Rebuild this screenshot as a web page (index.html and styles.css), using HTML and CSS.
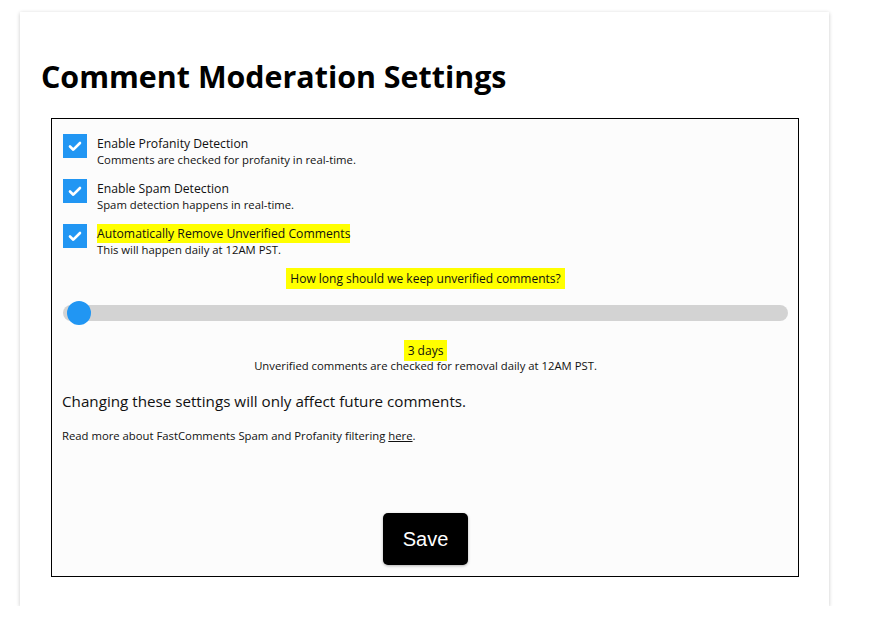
FILE: index.html
```html
<!DOCTYPE html>
<html>
<head>
<meta charset="utf-8">
<link rel="stylesheet" href="styles.css">
</head>
<body>
<div class="card">
  <h1 class="title">Comment Moderation Settings</h1>
  <div class="panel">
    <div class="option">
      <span class="check"><svg viewBox="0 0 24 24" width="24" height="24"><path d="M7 12.5l3.3 3.2L17 9" fill="none" stroke="#fff" stroke-width="2.6" stroke-linecap="round" stroke-linejoin="round"/></svg></span>
      <div class="option-text">
        <div class="option-label">Enable Profanity Detection</div>
        <div class="option-desc">Comments are checked for profanity in real-time.</div>
      </div>
    </div>
    <div class="option">
      <span class="check"><svg viewBox="0 0 24 24" width="24" height="24"><path d="M7 12.5l3.3 3.2L17 9" fill="none" stroke="#fff" stroke-width="2.6" stroke-linecap="round" stroke-linejoin="round"/></svg></span>
      <div class="option-text">
        <div class="option-label">Enable Spam Detection</div>
        <div class="option-desc">Spam detection happens in real-time.</div>
      </div>
    </div>
    <div class="option">
      <span class="check"><svg viewBox="0 0 24 24" width="24" height="24"><path d="M7 12.5l3.3 3.2L17 9" fill="none" stroke="#fff" stroke-width="2.6" stroke-linecap="round" stroke-linejoin="round"/></svg></span>
      <div class="option-text">
        <div class="option-label"><mark class="hl">Automatically Remove Unverified Comments</mark></div>
        <div class="option-desc">This will happen daily at 12AM PST.</div>
      </div>
    </div>
    <div class="question"><mark class="hl hl-wide">How long should we keep unverified comments?</mark></div>
    <div class="slider"><div class="track"></div><div class="thumb"></div></div>
    <div class="days"><mark class="hl hl-wide">3 days</mark></div>
    <div class="days-desc">Unverified comments are checked for removal daily at 12AM PST.</div>
    <p class="note">Changing these settings will only affect future comments.</p>
    <p class="readmore">Read more about FastComments Spam and Profanity filtering <a href="#">here</a>.</p>
    <div class="actions"><button class="save">Save</button></div>
  </div>
</div>
</body>
</html>
```
FILE: styles.css
```css
html, body {
  margin: 0;
  padding: 0;
  background: #fff;
}
body {
  font-family: "Open Sans", "Noto Sans", sans-serif;
  color: #111;
}
.card {
  box-sizing: border-box;
  margin: 12px 0 0 20px;
  width: 809px;
  height: 594px;
  padding: 45px 0 0 21px;
  background: #fff;
  box-shadow: 0 1px 4px rgba(0,0,0,0.22);
}
.title {
  margin: 0;
  font-size: 30.4px;
  line-height: 40px;
  font-weight: 700;
  color: #000;
  letter-spacing: 0;
}
.panel {
  box-sizing: border-box;
  margin: 21px 0 0 10px;
  width: 748px;
  height: 459px;
  border: 1px solid #000;
  background: #fcfcfc;
  padding: 15px 10px 10px 11px;
  display: flex;
  flex-direction: column;
}
.option {
  display: flex;
  align-items: flex-start;
  gap: 10px;
  height: 45px;
}
.check {
  width: 24px;
  height: 24px;
  background: #2196f3;
  flex: none;
  display: block;
}
.check svg { display: block; }
.option-text { padding-top: 2px; }
.option-label {
  font-size: 12.2px;
  line-height: 16px;
  color: #111;
}
.option-desc {
  font-size: 11.3px;
  line-height: 15px;
  color: #111;
}
.hl {
  background: #ffff00;
  color: inherit;
  padding: 1px 0;
}
.hl-wide { padding: 2px 4px; }
.question {
  text-align: center;
  font-size: 12px;
  line-height: 16px;
  margin-top: 2px;
}
.slider {
  position: relative;
  margin-top: 13px;
  height: 26px;
  display: flex;
  align-items: center;
}
.track {
  width: 100%;
  height: 16px;
  border-radius: 8px;
  background: #d3d3d3;
}
.thumb {
  position: absolute;
  left: 4px;
  top: 1px;
  width: 24px;
  height: 24px;
  border-radius: 50%;
  background: #2196f3;
}
.days {
  text-align: center;
  font-size: 12px;
  line-height: 16px;
  margin-top: 17px;
}
.days-desc {
  text-align: center;
  font-size: 11.3px;
  line-height: 14px;
}
.note {
  margin: 18px 0 0 -1px;
  font-size: 15.2px;
  line-height: 20px;
}
.readmore {
  margin: 18px 0 0 -1px;
  font-size: 11.3px;
  line-height: 14px;
}
.readmore a { color: #111; }
.actions {
  margin-top: auto;
  display: flex;
  justify-content: center;
}
.save {
  width: 85px;
  height: 52px;
  border: none;
  border-radius: 5px;
  background: #000;
  color: #fff;
  font-family: "Liberation Sans", Arial, sans-serif;
  font-size: 20px;
  box-shadow: 0 1px 3px rgba(0,0,0,0.3);
  margin-bottom: 1px;
}
```
